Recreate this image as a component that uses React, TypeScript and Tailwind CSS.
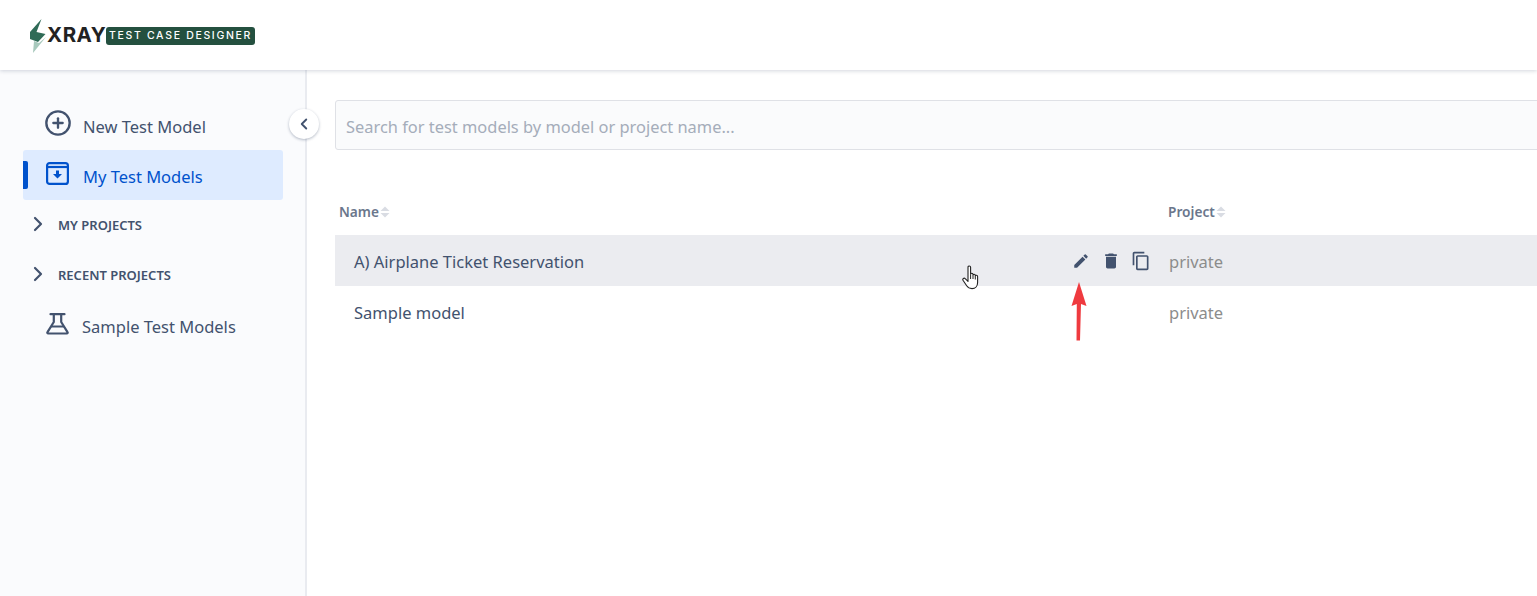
import { ChevronLeft, ChevronRight, CirclePlus } from "lucide-react";

const font = "font-['Noto_Sans','Open_Sans',sans-serif]";

function SortCaret() {
  return (
    <svg width="10" height="12" viewBox="0 0 10 12" className="ml-[1px]" fill="#d9dce3">
      <path d="M5 0.5 9.5 5H0.5Z" />
      <path d="M5 11.5 0.5 7H9.5Z" />
    </svg>
  );
}

function Logo() {
  return (
    <div className="flex items-center">
      <svg width="17" height="34" viewBox="0 0 17 34" className="mt-[1px]">
        <path d="M11.5 0 0 13v7l8 3 7.500-8-9-2Z" fill="#2f6b57" />
        <path d="M4 22l5 2 7-6L3 34Z" fill="#a8c9bd" />
      </svg>
      <span className="mt-[1px] w-[59px] font-['Inter',sans-serif] text-[20.5px] leading-none font-bold tracking-[0.5px] text-[#222222]">
        XRAY
      </span>
      <span className="mt-[1px] flex h-[18px] w-[149px] items-center justify-center rounded-[3px] bg-[#24503f] font-['Inter',sans-serif] text-[10.5px] font-medium tracking-[1.68px] whitespace-nowrap text-white">
        TEST CASE DESIGNER
      </span>
    </div>
  );
}

function ProjectGroup({ label }: { label: string }) {
  return (
    <div className="flex h-[50px] items-center pl-[26px]">
      <ChevronRight size={24} strokeWidth={2.2} className="mt-[-3px] text-[#42526e]" />
      <span className="ml-[8px] pt-[2px] text-[13px] font-semibold text-[#42526e]">{label}</span>
    </div>
  );
}

export default function App() {
  return (
    <div className={`relative flex h-[596px] flex-col overflow-hidden bg-white ${font}`}>
      {/* Top bar */}
      <header className="z-10 flex h-[70px] shrink-0 items-center bg-white pl-[30px] shadow-[0_1px_4px_rgba(9,30,66,0.18)]">
        <Logo />
      </header>

      <div className="flex flex-1">
        {/* Sidebar */}
        <aside className="relative w-[307px] shrink-0 border-r-2 border-[#e9ebf0] bg-[#fafbfd] pt-[30px] pl-[23px]">
          <div className="ml-[-23px] flex h-[50px] items-center pl-[44px] text-[#42526e]">
            <CirclePlus size={28} strokeWidth={2} className="mt-[-4px]" />
            <span className="ml-[11px] pt-[5px] text-[16.5px]">New Test Model</span>
          </div>
          <div className="relative flex h-[50px] w-[260px] items-center rounded-[3px] bg-[#deebff] pl-[23px] text-[#0052cc]">
            <div className="absolute top-[11px] left-0 h-[28px] w-[5px] rounded-r-[2px] bg-[#0052cc]" />
            <svg width="23" height="23" viewBox="0 0 23 23" className="mt-[-3px]" fill="none" stroke="currentColor">
              <rect x="1.1" y="1.1" width="20.8" height="20.8" rx="2.5" strokeWidth="2.2" />
              <path d="M1.1 5h20.8" strokeWidth="2.2" />
              <path d="M10 8.5h3v3.500h3l-4.500 4.500L7 12h3Z" fill="currentColor" stroke="none" />
            </svg>
            <span className="ml-[14px] pt-[5px] text-[16.5px]">My Test Models</span>
          </div>
          <div className="ml-[-23px]">
            <ProjectGroup label="MY PROJECTS" />
            <ProjectGroup label="RECENT PROJECTS" />
          </div>
          <div className="ml-[-23px] mt-[2px] flex h-[50px] items-center pl-[46px] text-[#42526e]">
            <svg width="23" height="22" viewBox="0 0 23 22" className="mt-[-7px]" fill="none" stroke="currentColor">
              <path d="M4.500 1.200h14" strokeWidth="2.200" strokeLinecap="round" />
              <path d="M7.800 1.500v7.500L1.500 19.200a.8.8 0 0 0 .7 1.300h18.600a.8.8 0 0 0 .7-1.300L15.200 9V1.500" strokeWidth="2.200" strokeLinejoin="round" />
              <path d="M5 13.500h13" strokeWidth="2" />
            </svg>
            <span className="ml-[13px] pt-[1px] text-[16.5px]">Sample Test Models</span>
          </div>
          {/* Collapse toggle */}
          <button className="absolute top-[39px] right-[-14px] flex h-[30px] w-[30px] items-center justify-center rounded-full bg-white text-[#42526e] shadow-[0_1px_3px_rgba(9,30,66,0.3)]">
            <ChevronLeft size={18} strokeWidth={2.5} />
          </button>
        </aside>

        {/* Main */}
        <main className="relative min-w-0 flex-1 pt-[30px] pl-[28px]">
          <div className="mr-[-10px] flex h-[50px] items-center rounded-[3px] border border-[#dfe1e6] bg-[#fafbfc] pt-[5px] pl-[10px] text-[16.42px] text-[#a5adba]">
            Search for test models by model or project name...
          </div>

          <div className="mt-[40px] flex h-[45px] items-center text-[13.7px] font-semibold text-[#6b778c]">
            <div className="flex w-[833px] items-center pl-[4px]">
              Name
              <SortCaret />
            </div>
            <div className="flex items-center">
              Project
              <SortCaret />
            </div>
          </div>

          <div className="flex h-[51px] items-center bg-[#ebecf0] text-[16.5px]">
            <span className="w-[736px] pt-[4px] pl-[19px] text-[#42526e]">A) Airplane Ticket Reservation</span>
            <div className="flex w-[97px] items-center text-[#42526e]">
              <svg width="18" height="18" viewBox="0 0 24 24" fill="currentColor" className="ml-[1px]">
                <path d="M3 17.25V21h3.750L17.810 9.940l-3.750-3.750L3 17.250zM20.710 7.040a1 1 0 0 0 0-1.410l-2.340-2.340a1 1 0 0 0-1.410 0l-1.830 1.830 3.750 3.750 1.830-1.830z" />
              </svg>
              <svg width="20" height="20" viewBox="0 0 24 24" fill="currentColor" className="ml-[11px]">
                <path d="M6 19c0 1.100.9 2 2 2h8c1.100 0 2-.9 2-2V7H6v12zM19 4h-3.500l-1-1h-5l-1 1H5v2h14V4z" />
              </svg>
              <svg width="20" height="20" viewBox="0 0 24 24" fill="currentColor" className="ml-[10px]">
                <path d="M16 1H4c-1.100 0-2 .9-2 2v14h2V3h12V1zm3 4H8c-1.100 0-2 .9-2 2v14c0 1.100.9 2 2 2h11c1.100 0 2-.9 2-2V7c0-1.100-.9-2-2-2zm0 16H8V7h11v14z" />
              </svg>
            </div>
            <span className="pt-[4px] pl-[1px] text-[#8c8c8c]">private</span>
          </div>
          <div className="mt-[1px] flex h-[51px] items-center text-[16.5px]">
            <span className="w-[833px] pt-[2px] pl-[19px] text-[#42526e]">Sample model</span>
            <span className="pt-[2px] pl-[1px] text-[#8c8c8c]">private</span>
          </div>

          {/* Annotation: pointer cursor */}
          <svg width="19" height="25" viewBox="0 0 19 25" className="absolute top-[195px] left-[655px]">
            <path
              d="M6 2.200c0-1.700 2.600-1.700 2.600 0v7c0-1.300 2.400-1.300 2.400 0v1c0-1.300 2.300-1.300 2.300 0v1c0-1.200 2.300-1.200 2.300.2v6c0 3.600-2.200 6.200-5.600 6.200-2.800 0-4.200-1-5.300-2.800L1 15.200c-.8-1.500 1.100-2.700 2.200-1.500L6 16.400Z"
              fill="#fff"
              stroke="#222"
              strokeWidth="1.1"
              strokeLinejoin="round"
            />
            <path d="M8.600 9.500v4.500M11 10.500v3.500M13.300 11.500v3" stroke="#222" strokeWidth="1" fill="none" />
          </svg>

          {/* Annotation: red arrow */}
          <svg width="18" height="60" viewBox="0 0 18 60" className="absolute top-[212px] left-[763px]">
            <path d="M9 0 16.500 24 11 22 10 58.500 6.500 58.500 6.800 22 1.500 24Z" fill="#ef3a3f" />
          </svg>
        </main>
      </div>
    </div>
  );
}
